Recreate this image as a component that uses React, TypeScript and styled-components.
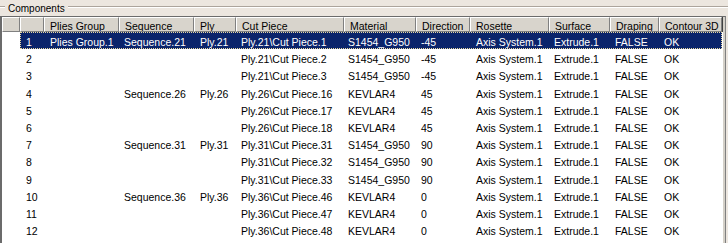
import styled, { createGlobalStyle } from "styled-components";

const GlobalStyle = createGlobalStyle`
    html, body {
        margin: 0;
        padding: 0;
        background: #ece6df;
        overflow: hidden;
    }
    body {
        font-family: "Liberation Sans", Arial, sans-serif;
        font-size: 10px;
        color: #000;
    }
`;

// column widths of the list view, left to right
const COLS = [18, 24, 75, 75, 42, 108, 72, 54, 79, 61, 49, 63];
const toTemplate = (cols: number[]) => cols.map((w) => `${w}px`).join(" ");

const Frame = styled.div`
    width: 728px;
    height: 243px;
    display: flex;
    flex-direction: column;
    background: #ece6df;
`;

const GroupTitleRow = styled.div`
    display: flex;
    align-items: flex-start;
    height: 16px;
`;

const Etch = styled.div<{ $grow?: boolean }>`
    width: ${(p) => (p.$grow ? "auto" : "5px")};
    flex: ${(p) => (p.$grow ? 1 : "none")};
    margin-top: 6px;
    height: 0;
    border-top: 1px solid #aca49c;
    border-bottom: 1px solid #ffffff;
`;

const GroupTitle = styled.span`
    padding: 2px 3px 0;
    line-height: 13px;
`;

const ListView = styled.div`
    width: 726px;
    flex: 1;
    background: #ffffff;
    border-left: 2px solid #6b6b6b;
    border-top: 1px solid #6b6b6b;
    border-right: 1px solid #808080;
    box-shadow: inset -2px 0 0 #d4d0c8;
    box-sizing: border-box;
    overflow: hidden;
    font-size: 10.5px;
`;

const HeaderRow = styled.div`
    display: grid;
    grid-template-columns: ${toTemplate(COLS)};
    height: 15px;
`;

const HeaderCell = styled.div`
    background: #d8d4cc;
    border-top: 1px solid #ffffff;
    border-left: 1px solid #ffffff;
    border-right: 1px solid #808080;
    border-bottom: 1px solid #808080;
    box-shadow: 1px 0 0 #404040;
    box-sizing: border-box;
    padding: 2px 0 0 5px;
    line-height: 12px;
    white-space: nowrap;
    overflow: hidden;
`;

const Row = styled.div`
    display: grid;
    grid-template-columns: ${toTemplate(COLS)};
    height: 17.2px;
`;

const Selection = styled.div`
    grid-column: 2 / -1;
    display: grid;
    grid-template-columns: ${toTemplate(COLS.slice(1))};
    background: #0b246b;
    color: #ffffff;
    outline: 1px dotted #e8d8a0;
    outline-offset: -1px;
`;

const Cell = styled.div<{ $pad?: number }>`
    padding: 4px 0 0 ${(p) => p.$pad ?? 5}px;
    line-height: 13px;
    white-space: nowrap;
    overflow: hidden;
`;

const HEADERS = [
    "",
    "",
    "Plies Group",
    "Sequence",
    "Ply",
    "Cut Piece",
    "Material",
    "Direction",
    "Rosette",
    "Surface",
    "Draping",
    "Contour 3D",
];

interface IPly {
    group: string;
    sequence: string;
    ply: string;
    cut: string;
    material: string;
    direction: string;
}

const PLIES: IPly[] = [
    { group: "Plies Group.1", sequence: "Sequence.21", ply: "Ply.21", cut: "Ply.21\\Cut Piece.1", material: "S1454_G950", direction: "-45" },
    { group: "", sequence: "", ply: "", cut: "Ply.21\\Cut Piece.2", material: "S1454_G950", direction: "-45" },
    { group: "", sequence: "", ply: "", cut: "Ply.21\\Cut Piece.3", material: "S1454_G950", direction: "-45" },
    { group: "", sequence: "Sequence.26", ply: "Ply.26", cut: "Ply.26\\Cut Piece.16", material: "KEVLAR4", direction: "45" },
    { group: "", sequence: "", ply: "", cut: "Ply.26\\Cut Piece.17", material: "KEVLAR4", direction: "45" },
    { group: "", sequence: "", ply: "", cut: "Ply.26\\Cut Piece.18", material: "KEVLAR4", direction: "45" },
    { group: "", sequence: "Sequence.31", ply: "Ply.31", cut: "Ply.31\\Cut Piece.31", material: "S1454_G950", direction: "90" },
    { group: "", sequence: "", ply: "", cut: "Ply.31\\Cut Piece.32", material: "S1454_G950", direction: "90" },
    { group: "", sequence: "", ply: "", cut: "Ply.31\\Cut Piece.33", material: "S1454_G950", direction: "90" },
    { group: "", sequence: "Sequence.36", ply: "Ply.36", cut: "Ply.36\\Cut Piece.46", material: "KEVLAR4", direction: "0" },
    { group: "", sequence: "", ply: "", cut: "Ply.36\\Cut Piece.47", material: "KEVLAR4", direction: "0" },
    { group: "", sequence: "", ply: "", cut: "Ply.36\\Cut Piece.48", material: "KEVLAR4", direction: "0" },
];

function PlyCells({ index, ply }: { index: number; ply: IPly }) {
    return (
        <>
            <Cell $pad={6}>{index + 1}</Cell>
            <Cell $pad={6}>{ply.group}</Cell>
            <Cell>{ply.sequence}</Cell>
            <Cell $pad={6}>{ply.ply}</Cell>
            <Cell $pad={5}>{ply.cut}</Cell>
            <Cell $pad={4}>{ply.material}</Cell>
            <Cell>{ply.direction}</Cell>
            <Cell $pad={6}>Axis System.1</Cell>
            <Cell $pad={5}>Extrude.1</Cell>
            <Cell $pad={5}>FALSE</Cell>
            <Cell $pad={5}>OK</Cell>
        </>
    );
}

function App() {
    return (
        <>
            <GlobalStyle />
            <Frame>
                <GroupTitleRow>
                    <Etch />
                    <GroupTitle>Components</GroupTitle>
                    <Etch $grow />
                </GroupTitleRow>
                <ListView>
                    <HeaderRow>
                        {HEADERS.map((h, i) => (
                            <HeaderCell key={i}>{h}</HeaderCell>
                        ))}
                    </HeaderRow>
                    {PLIES.map((ply, i) => (
                        <Row key={i}>
                            <Cell />
                            {i === 0 ? (
                                <Selection>
                                    <PlyCells index={i} ply={ply} />
                                </Selection>
                            ) : (
                                <PlyCells index={i} ply={ply} />
                            )}
                        </Row>
                    ))}
                </ListView>
            </Frame>
        </>
    );
}

export default App;
